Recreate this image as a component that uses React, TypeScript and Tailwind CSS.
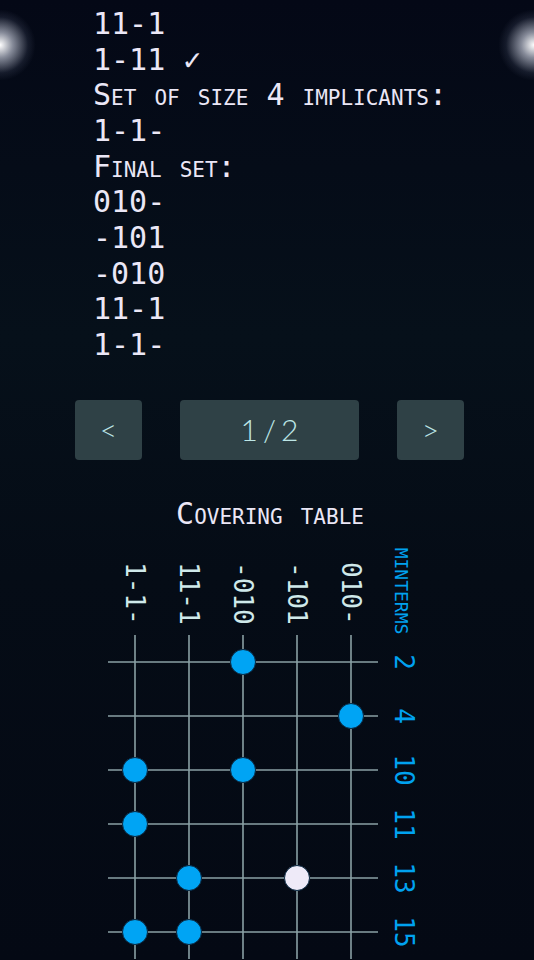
import React from "react";

const steps = ["11-1", "1-11 ✓", "Set of size 4 implicants:", "1-1-", "Final set:", "010-", "-101", "-010", "11-1", "1-1-"];

const implicants = ["1-1-", "11-1", "-010", "-101", "010-"];
const minterms = ["2", "4", "10", "11", "13", "15"];

// which implicant covers which minterm: 1 = covered, 2 = covered (not chosen)
const cover: Record<string, number[]> = {
  "2": [0, 0, 1, 0, 0],
  "4": [0, 0, 0, 0, 1],
  "10": [1, 0, 1, 0, 0],
  "11": [1, 0, 0, 0, 0],
  "13": [0, 1, 0, 2, 0],
  "15": [1, 1, 0, 0, 0],
};

const COL0 = 135;
const ROW0 = 123;
const STEP = 54;

const CoveringTable = () => {
  return (
    <svg width={534} height={420} className="block" style={{ fontFamily: "'DejaVu Sans Mono', monospace" }}>
      {implicants.map((imp, i) => (
        <line key={"v" + i} x1={COL0 + i * STEP} y1={96} x2={COL0 + i * STEP} y2={420} stroke="#8aa0a4" strokeWidth={1.6} />
      ))}
      {minterms.map((m, j) => (
        <line key={"h" + j} x1={108} y1={ROW0 + j * STEP} x2={378} y2={ROW0 + j * STEP} stroke="#8aa0a4" strokeWidth={1.6} />
      ))}
      {implicants.map((imp, i) => (
        <text
          key={"t" + i}
          transform={`translate(${COL0 + i * STEP - 9.5},23) rotate(90)`}
          fontSize={26}
          fill="#cfe9ea"
        >
          {imp}
        </text>
      ))}
      <text transform="translate(395,52) rotate(90)" fontSize={26} fill="#00a2f0" textAnchor="middle" style={{ fontVariant: "small-caps" }}>
        minterms
      </text>
      {minterms.map((m, j) => (
        <text
          key={"m" + j}
          transform={`translate(395,${ROW0 + j * STEP}) rotate(90)`}
          fontSize={26}
          fill="#00a2f0"
          textAnchor="middle"
        >
          {m}
        </text>
      ))}
      {minterms.map((m, j) =>
        cover[m].map((c, i) =>
          c ? (
            <circle
              key={m + "-" + i}
              cx={COL0 + i * STEP}
              cy={ROW0 + j * STEP}
              r={12.5}
              fill={c === 1 ? "#00a4f4" : "#eeeaf8"}
              stroke="#0b2a44"
              strokeWidth={1}
            />
          ) : null
        )
      )}
    </svg>
  );
};

const App = () => {
  return (
    <div className="relative w-[534px] h-[960px] overflow-hidden bg-[linear-gradient(180deg,#040816_0%,#06101a_35%,#050c16_60%,#040914_100%)]">
      {/* glows on the edges */}
      <div className="absolute left-[-36px] top-[9px] w-[72px] h-[72px] rounded-full bg-[radial-gradient(circle,rgba(255,255,255,1)_0%,rgba(220,225,240,0.6)_25%,rgba(120,130,160,0.15)_55%,transparent_70%)]" />
      <div className="absolute right-[-36px] top-[9px] w-[72px] h-[72px] rounded-full bg-[radial-gradient(circle,rgba(255,255,255,1)_0%,rgba(220,225,240,0.6)_25%,rgba(120,130,160,0.15)_55%,transparent_70%)]" />

      <div className="relative pl-[93px] pt-[6px] text-[30px] leading-[35.67px] text-[#ebe7f6] [font-variant:small-caps] font-['DejaVu_Sans_Mono',monospace] whitespace-pre">
        {steps.map((s, i) => (
          <div key={i}>{s}</div>
        ))}
      </div>

      <div className="relative flex gap-[38px] pl-[75px] mt-[37px]">
        <button className="w-[67px] h-[60px] rounded-[4px] bg-[#2f4146] text-[#bde6e6] text-[30px] font-light font-['Lato',sans-serif]">
          &lt;
        </button>
        <button className="w-[179px] h-[60px] rounded-[4px] bg-[#2f4146] text-[#bde6e6] text-[30px] font-light font-['Lato',sans-serif] tracking-[5px] pl-[5px]">
          1/2
        </button>
        <button className="w-[67px] h-[60px] rounded-[4px] bg-[#2f4146] text-[#bde6e6] text-[30px] font-light font-['Lato',sans-serif]">
          &gt;
        </button>
      </div>

      <div className="relative w-[390px] ml-[75px] mt-[36px] text-center text-[30px] leading-[36px] text-[#ebe7f6] [font-variant:small-caps] font-['DejaVu_Sans_Mono',monospace]">
        Covering table
      </div>

      <div className="relative mt-[7px]">
        <CoveringTable />
      </div>
    </div>
  );
};

export default App;
